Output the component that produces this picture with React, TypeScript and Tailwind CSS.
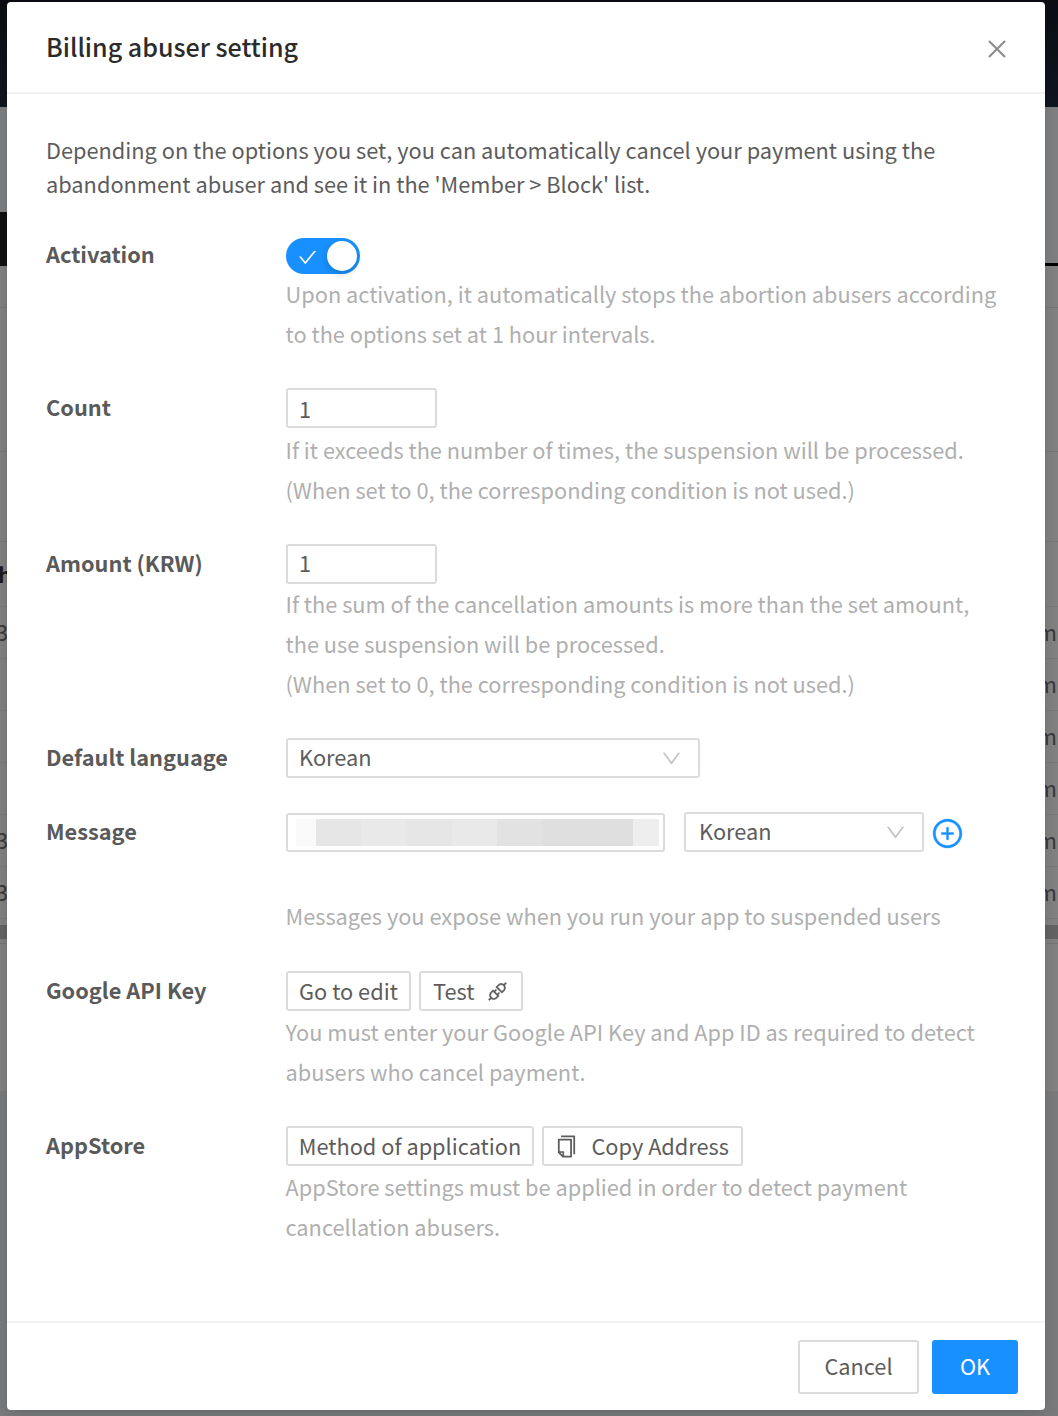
import type { ReactNode } from 'react';
import { AiOutlineApi, AiOutlineCheck, AiOutlineClose, AiOutlineCopy, AiOutlineDown, AiOutlinePlusCircle } from 'react-icons/ai';

const box = 'border-2 border-[#dbdbdb] rounded-[3px] bg-white';

function Row({ label, height, lead = 'leading-[37px]', children }: { label: string; height: string; lead?: string; children: ReactNode }) {
  return (
    <div className={`flex shrink-0 ${height}`}>
      <div className={`h-[40px] w-[240px] shrink-0 font-bold text-[#5a5a5a] ${lead}`}>{label}</div>
      <div className="flex min-w-0 flex-1 flex-col items-start">{children}</div>
    </div>
  );
}

function Help({ lines, gap = 'mt-px' }: { lines: string[]; gap?: string }) {
  return (
    <div className={`${gap} -ml-[0.5px] leading-[40px] whitespace-nowrap text-[#afafaf]`}>
      {lines.map((l) => (
        <div key={l}>
          <span>{l}</span>
        </div>
      ))}
    </div>
  );
}

function Select({ width, pad }: { width: string; pad: string }) {
  return (
    <div className={`flex h-[40px] items-center justify-between pr-[15px] ${pad} ${width} ${box}`}>
      <span className="pb-px">Korean</span>
      <AiOutlineDown className="mt-[1px] size-[23px] text-[#c4c4c4]" />
    </div>
  );
}

function TableRow({ left = '', right = 'm' }: { left?: string; right?: string }) {
  return (
    <div className="flex h-[52px] shrink-0 items-center justify-between border-b border-[#797979] pb-px text-[#3a3a3a]">
      <span className="-ml-[4px]">{left}</span>
      <span className="mr-px">{right}</span>
    </div>
  );
}

function Backdrop() {
  return (
    <div className="absolute inset-0 flex flex-col overflow-hidden bg-[#828282]">
      <div className="h-[107px] shrink-0 bg-linear-to-b from-[#0b0d13] to-[#101620]" />
      <div className="h-[105px] shrink-0 bg-[#7f8082]" />
      <div className="flex h-[54px] shrink-0 justify-between">
        <div className="w-[100px] bg-[#101010]" />
        <div className="flex w-[100px] flex-col justify-end bg-[#7f8082]">
          <div className="h-[3px] bg-black" />
        </div>
      </div>
      <div className="h-[42px] shrink-0 border-b border-[#777]" />
      <div className="h-[144px] shrink-0 border-b border-[#777]" />
      <div className="h-[90px] shrink-0 border-b border-[#777]" />
      <div className="flex h-[65px] shrink-0 items-center border-b border-[#797979] font-bold text-[#1c1c1c]">
        <span className="-ml-[2px]">h</span>
      </div>
      <TableRow left="3" />
      <TableRow />
      <TableRow />
      <TableRow />
      <TableRow left="3" />
      <TableRow left="3" />
      <div className="mt-[6px] h-[14px] shrink-0 bg-[#646464]" />
      <div className="mt-[4px] h-px shrink-0 bg-[#777]" />
      <div className="mt-[147px] flex-1 bg-[#7a7b7d]" />
    </div>
  );
}

const mosaic = [
  ['w-[20px]', 'bg-[#fafafa]'],
  ['w-[45px]', 'bg-[#e6e6e6]'],
  ['w-[45px]', 'bg-[#e9e9e9]'],
  ['w-[46px]', 'bg-[#e6e6e6]'],
  ['w-[45px]', 'bg-[#e9e9e9]'],
  ['w-[45px]', 'bg-[#e2e2e2]'],
  ['w-[91px]', 'bg-[#dfdfdf]'],
  ['w-[26px]', 'bg-[#eeeeee]'],
];

export default function App() {
  return (
    <div className="relative flex h-[1416px] w-[1058px] overflow-hidden pt-[2px] pl-[7px] font-['Noto_Sans_CJK_KR',sans-serif] text-[21.77px] text-[#5c5c5c]">
      <Backdrop />
      <div className="relative flex h-[1408px] w-[1038px] flex-col rounded-[4px] bg-white shadow-[0_4px_16px_rgba(0,0,0,0.15)]">
        <div className="flex h-[92px] shrink-0 items-center justify-between border-b-2 border-[#f2f2f2] pr-[35px] pl-[39px]">
          <h1 className="text-[25.05px] font-medium text-[#2b2b2b]">
            <span>Billing abuser setting</span>
          </h1>
          <AiOutlineClose className="mt-[4px] size-[26px] text-[#8c8c8c]" />
        </div>

        <div className="flex flex-1 flex-col pt-[39px] pl-[39px]">
          <p className="h-[103px] shrink-0 leading-[33.5px] whitespace-nowrap">
            <span>Depending on the options you set, you can automatically cancel your payment using the</span>
            <br />
            <span>abandonment abuser and see it in the &#39;Member &gt; Block&#39; list.</span>
          </p>

          <Row label="Activation" height="h-[152px]" lead="leading-[35px]">
            <div className="mt-[2px] flex h-[36px] w-[74px] items-center justify-between rounded-full bg-[#1890ff] pr-[3px] pl-[11px]">
              <AiOutlineCheck className="mt-[3px] size-[21px] text-white" />
              <div className="size-[30px] rounded-full bg-white shadow-[0_3px_6px_rgba(0,35,11,0.2)]" />
            </div>
            <Help gap="mt-0" lines={['Upon activation, it automatically stops the abortion abusers according', 'to the options set at 1 hour intervals.']} />
          </Row>
          <Row label="Count" height="h-[156px]" lead="leading-[38px]">
            <div className={`flex h-[40px] w-[151px] items-center pl-[11px] ${box}`}>
              <span className="mt-[2px]">1</span>
            </div>
            <Help gap="mt-[2px]" lines={['If it exceeds the number of times, the suspension will be processed.', '(When set to 0, the corresponding condition is not used.)']} />
          </Row>
          <Row label="Amount (KRW)" height="h-[194px]">
            <div className={`flex h-[40px] w-[151px] items-center pb-[2px] pl-[11px] ${box}`}>1</div>
            <Help gap="mt-0" lines={['If the sum of the cancellation amounts is more than the set amount,', 'the use suspension will be processed.', '(When set to 0, the corresponding condition is not used.)']} />
          </Row>
          <Row label="Default language" height="h-[74px]">
            <Select width="w-[414px]" pad="pl-[11px]" />
          </Row>
          <Row label="Message" height="h-[159px]">
            <div className="flex items-center">
              <div className={`flex h-[39px] w-[379px] items-center pl-[8px] ${box}`}>
                {mosaic.map(([w, c], i) => (
                  <div key={i} className={`h-[27px] shrink-0 ${w} ${c}`} />
                ))}
              </div>
              <div className="ml-[19px]">
                <Select width="w-[240px]" pad="pl-[13px]" />
              </div>
              <AiOutlinePlusCircle className="mt-[2px] ml-[7px] size-[33px] text-[#1890ff]" stroke="currentColor" strokeWidth={12} />
            </div>
            <Help gap="mt-[44px]" lines={['Messages you expose when you run your app to suspended users']} />
          </Row>
          <Row label="Google API Key" height="h-[155px]">
            <div className="flex gap-[8px]">
              <button className={`h-[40px] w-[125px] pt-px whitespace-nowrap ${box}`}>Go to edit</button>
              <button className={`flex h-[40px] w-[104px] items-center justify-between px-[12px] pt-px ${box}`}>
                <span>Test</span>
                <AiOutlineApi className="size-[23px]" stroke="currentColor" strokeWidth={12} />
              </button>
            </div>
            <Help lines={['You must enter your Google API Key and App ID as required to detect', 'abusers who cancel payment.']} />
          </Row>
          <Row label="AppStore" height="h-[155px]">
            <div className="flex gap-[8px]">
              <button className={`h-[40px] w-[248px] pt-px whitespace-nowrap ${box}`}>Method of application</button>
              <button className={`flex h-[40px] w-[201px] items-center justify-between pt-px pr-[12px] pl-[10px] whitespace-nowrap ${box}`}>
                <AiOutlineCopy className="size-[25px]" />
                <span>Copy Address</span>
              </button>
            </div>
            <Help lines={['AppStore settings must be applied in order to detect payment', 'cancellation abusers.']} />
          </Row>
        </div>

        <div className="flex h-[89px] shrink-0 justify-end gap-[13px] border-t-2 border-[#f2f2f2] pt-[17px] pr-[27px]">
          <button className={`h-[54px] w-[121px] pb-px ${box}`}>Cancel</button>
          <button className="h-[54px] w-[86px] rounded-[3px] bg-[#1890ff] pb-px text-white">OK</button>
        </div>
      </div>
    </div>
  );
}
